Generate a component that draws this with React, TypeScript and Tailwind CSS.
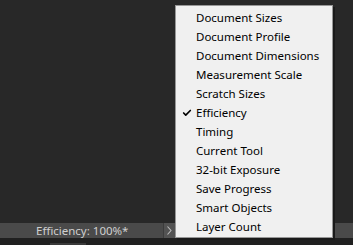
import { Check } from 'lucide-react';

const items = [
  'Document Sizes',
  'Document Profile',
  'Document Dimensions',
  'Measurement Scale',
  'Scratch Sizes',
  'Efficiency',
  'Timing',
  'Current Tool',
  '32-bit Exposure',
  'Save Progress',
  'Smart Objects',
  'Layer Count',
];

export default function App() {
  return (
    <div className="relative w-[353px] h-[245px] overflow-hidden bg-[#282828] flex flex-col" style={{ fontFamily: '"Noto Sans", "Open Sans", sans-serif' }}>
      <div className="flex-1" />
      {/* status bar */}
      <div className="h-[15px] bg-[#4a4a4a] flex items-center">
        <span className="ml-[36px] w-[127px] text-[11.5px] leading-none text-[#cfcfcf]">Efficiency: 100%*</span>
        <div className="h-full w-[12px] bg-[#535353] border-l border-[#3c3c3c] flex items-center justify-center text-[#bdbdbd]">
          <svg width="5" height="9" viewBox="0 0 5 9" fill="none">
            <path d="M0.5 0.5 L4 4.5 L0.5 8.5" stroke="currentColor" strokeWidth="1.1" />
          </svg>
        </div>
      </div>
      <div className="h-[7px] bg-[#202020] flex items-end">
        <div className="ml-[50px] w-[36px] h-[2px] bg-[#3a3a3a]" />
      </div>

      {/* dropdown menu */}
      <div className="absolute left-[175px] top-[5px] w-[158px] h-[233px] bg-[#f0f0f0] border border-[#979797] shadow-[2px_2px_0_#1a1a1a] pt-[2px]">
        {items.map((it) => (
          <div key={it} className="h-[19px] flex items-center text-[11.5px] text-[#000] leading-none">
            <div className="w-[20px] flex justify-end pr-[4px]">
              {it === 'Efficiency' && <Check size={10} strokeWidth={4} />}
            </div>
            <span>{it}</span>
          </div>
        ))}
      </div>
    </div>
  );
}
